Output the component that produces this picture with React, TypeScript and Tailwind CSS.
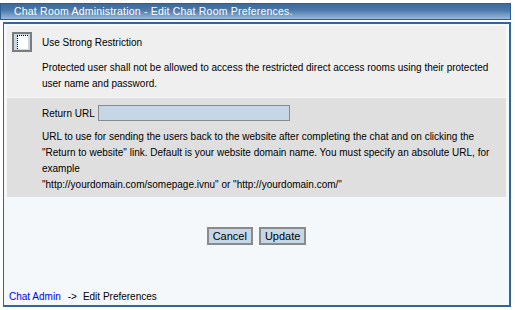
export default function App() {
  const font = { fontFamily: '"Liberation Sans", Arial, sans-serif' }
  return (
    <div className="w-[515px] h-[310px] bg-white text-[10px] text-black" style={font}>
      {/* title bar */}
      <div className="mt-[3px] w-[511px] h-[17px] border border-[#2c5e90] bg-[linear-gradient(to_bottom,#3d6a9a_0%,#4a78a8_40%,#7299c2_70%,#9bbad9_100%)] flex items-center pl-[13px]">
        <span className="text-white text-[10.5px] tracking-[0.2px]">Chat Room Administration - Edit Chat Room Preferences.</span>
      </div>

      {/* main panel */}
      <div className="mt-[2px] ml-[3px] w-[508px] h-[285px] border-2 border-l border-[#2e669d] bg-[#f4f8fb] px-[3px] pt-[2px] flex flex-col">
        <div className="bg-[#efefef] h-[71px] pt-[6px]">
          <div className="flex items-center pl-[5px]">
            <div className="w-[20px] h-[20px] border-2 border-[#7c7c7c] bg-[#c7d9e9] flex items-center justify-center">
              <div className="w-[11px] h-[14px] bg-white border-t border-l border-dotted border-black" />
            </div>
            <span className="ml-[10px] text-[10px]">Use Strong Restriction</span>
          </div>
          <p className="pl-[35px] pr-[8px] mt-[8px] leading-[16px]">
            Protected user shall not be allowed to access the restricted direct access rooms using their protected user name and password.
          </p>
        </div>

        <div className="mt-[1px] bg-[#dfdfdf] h-[99px] pt-[7px]">
          <div className="flex items-center pl-[35px]">
            <span>Return URL</span>
            <div className="ml-[3px] w-[192px] h-[16px] border border-[#8a8a8a] bg-[#c5d7e6]" />
          </div>
          <p className="pl-[35px] pr-[12px] mt-[8px] leading-[16px]">
            URL to use for sending the users back to the website after completing the chat and on clicking the "Return to website" link. Default is your website domain name. You must specify an absolute URL, for example
            <br />
            "http://yourdomain.com/somepage.ivnu" or "http://yourdomain.com/"
          </p>
        </div>

        <div className="flex justify-center gap-[6px] mt-[30px]">
          <button className="h-[18px] px-[4px] border-2 border-[#8a8a8a] bg-[#c5d7e6] text-[11px] leading-none" style={font}>Cancel</button>
          <button className="h-[18px] px-[4px] border-2 border-[#8a8a8a] bg-[#c5d7e6] text-[11px] leading-none" style={font}>Update</button>
        </div>

        <div className="mt-auto mb-[1px] pl-[2px] flex items-center">
          <span className="text-[#0000ff]">Chat Admin</span>
          <span className="ml-[7px]">-&gt;</span>
          <span className="ml-[6px]">Edit Preferences</span>
        </div>
      </div>
    </div>
  )
}
